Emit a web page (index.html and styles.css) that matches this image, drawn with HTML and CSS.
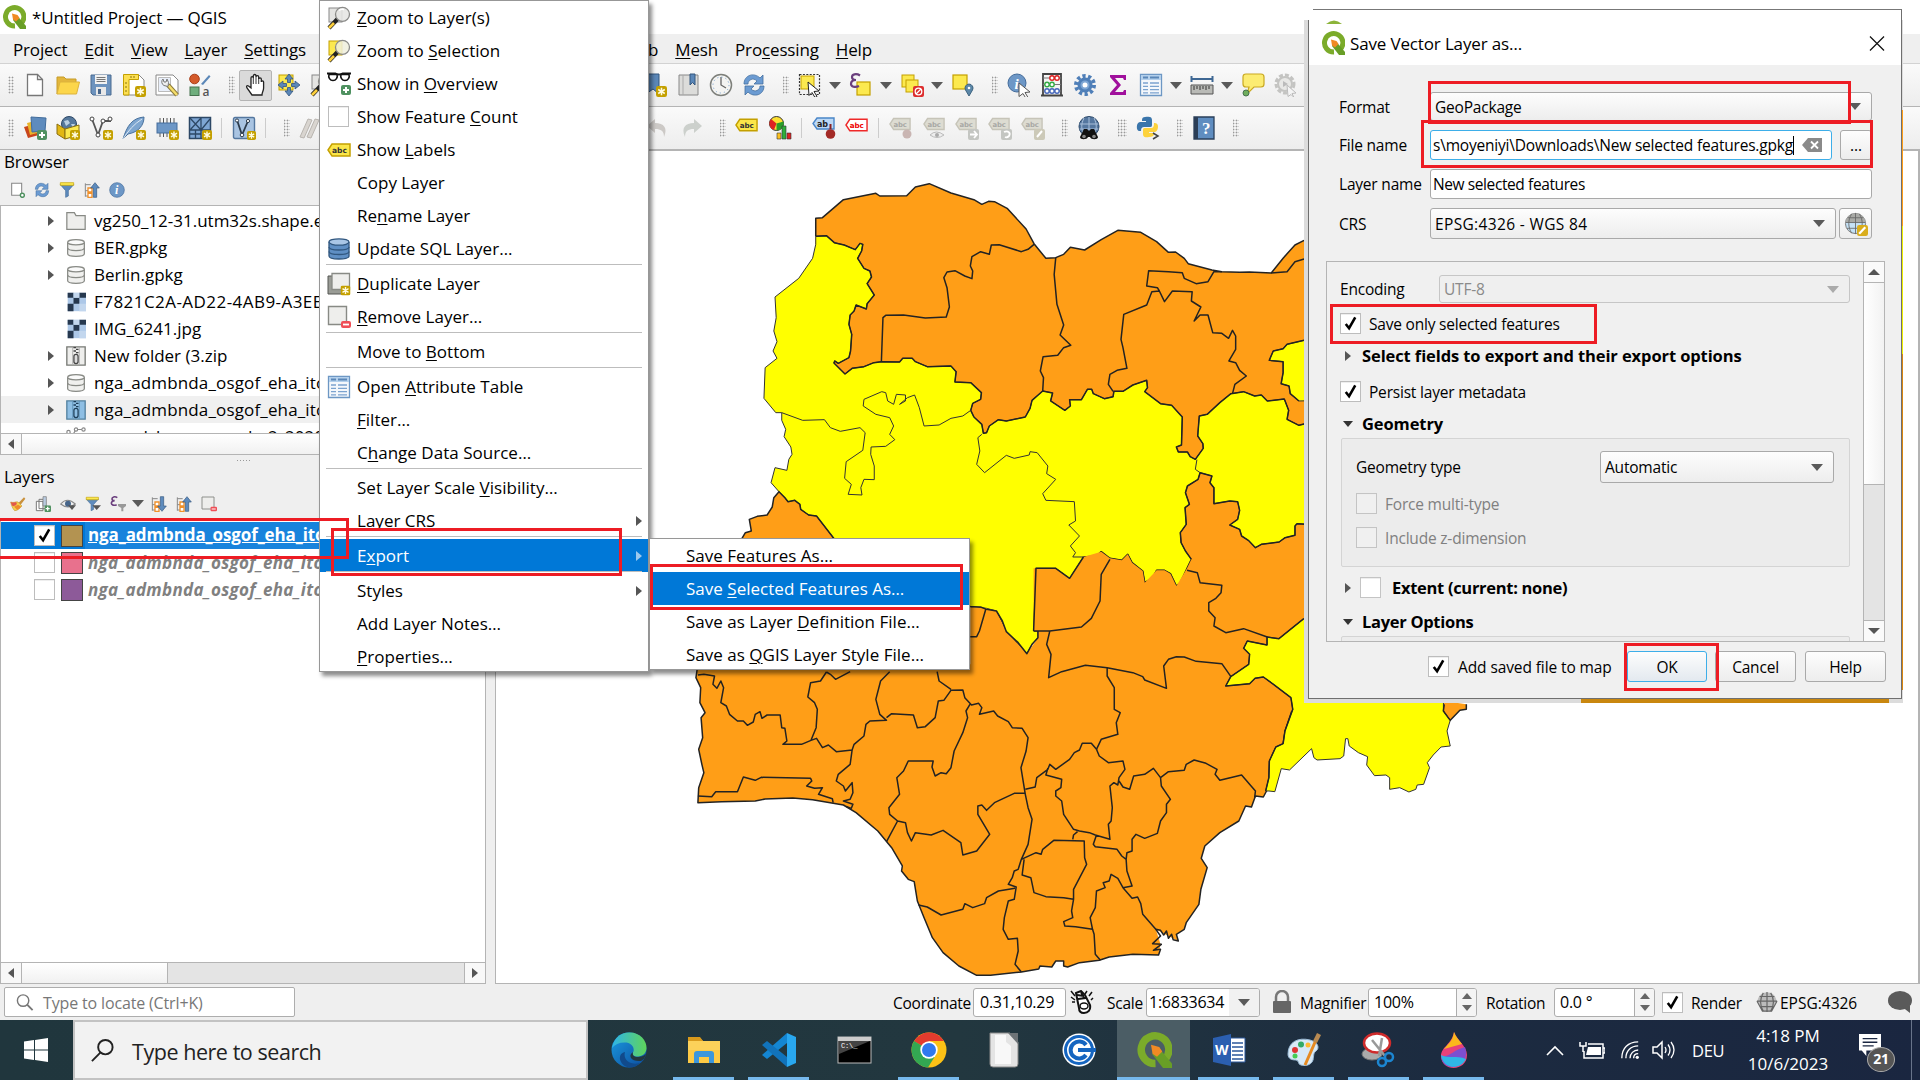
FILE: index.html
```html
<!DOCTYPE html>
<html lang="en">
<head>
<meta charset="utf-8">
<title>*Untitled Project — QGIS</title>
<link rel="stylesheet" href="styles.css">
</head>
<body>
<svg class="defs" width="0" height="0">
  <defs>
    <linearGradient id="gEdge" x1="0" y1="0" x2="1" y2="1"><stop offset="0" stop-color="#1b9de2"/><stop offset="1" stop-color="#0c4a9c"/></linearGradient>
    <linearGradient id="gEdge2" x1="0" y1="0" x2="1" y2="0"><stop offset="0" stop-color="#2fb4e8"/><stop offset="1" stop-color="#5fd45a"/></linearGradient>
  </defs>
  <symbol id="star" viewBox="0 0 10 10"><rect width="10" height="10" rx="2" fill="#c4a000"/><path d="M5 1.500v7M2 3.200l6 3.600M8 3.200L2 6.800" stroke="#fffbe0" stroke-width="1.400"/></symbol>
  <symbol id="plus" viewBox="0 0 10 10"><rect width="10" height="10" rx="2" fill="#4f9160"/><path d="M5 2v6M2 5h6" stroke="#fff" stroke-width="2"/></symbol>
  <symbol id="minus" viewBox="0 0 10 10"><rect y="2" width="10" height="7" rx="2" fill="#ef4e56"/><path d="M2 5.500h6" stroke="#fff" stroke-width="1.800"/></symbol>
  <symbol id="qgis" viewBox="0 0 24 24"><path d="M19 18.500A9.200 9.200 0 1 0 13 21" fill="none" stroke="#7bab2a" stroke-width="5"/><path d="M11.500 10.500l4.500 1 8 9.500v3h-6l-7-9z" fill="#689e26"/><path d="M10 8.500l5.500 1.500 2 3-3.500 3.500-3-2z" fill="#f08a24"/></symbol>
  <symbol id="new" viewBox="0 0 24 24"><path d="M4.500 1.500h10l5 5v16h-15z" fill="#fff" stroke="#777" stroke-width="1.300"/><path d="M14.500 1.500v5h5" fill="none" stroke="#777" stroke-width="1.300"/></symbol>
  <symbol id="open" viewBox="0 0 24 24"><path d="M1 21V4h7l2 2h10v4" fill="#e3b63c" stroke="#c79c28"/><path d="M1 21L4 9h19.500l-3 12z" fill="#fcd64b" stroke="#dcb33c"/></symbol>
  <symbol id="save" viewBox="0 0 24 24"><path d="M2 2h20v20H4l-2-2z" fill="#6d93be" stroke="#4b6b90"/><rect x="6" y="2" width="12" height="9" fill="#f1f1f1"/><path d="M7.500 4.500h9M7.500 6.500h9M7.500 8.500h9" stroke="#777"/><rect x="7" y="14" width="10" height="8" fill="#e8e8e8"/><rect x="9" y="16" width="3" height="5" fill="#48678c"/></symbol>
  <symbol id="layout" viewBox="0 0 24 24"><path d="M2 2h15l5 5v15H2z" fill="#fff" stroke="#888"/><path d="M1.500 1.500h15v5H7v15.500H1.500z" fill="#fcdf52" stroke="#c4a000"/><path d="M3 10h2M3 14h2M3 18h2M9 3v2M12 3v2" stroke="#8a7410"/><use href="#star" x="13" y="13" width="11" height="11"/></symbol>
  <symbol id="manager" viewBox="0 0 24 24"><path d="M1 2h17l5 5v15H1z" fill="#fff" stroke="#888"/><path d="M3.500 4.500h12v14h-12z" fill="#e9effa" stroke="#bbb"/><path d="M13 12l9 10" stroke="#8b7a3c" stroke-width="4.500"/><path d="M13.500 12.500l8.500 9.500" stroke="#f5dd6a" stroke-width="2.500"/><path d="M8 6a4 4 0 0 0 1 6.500l4 1 .5-4-1.500-3.500-1 3h-2z" fill="#eee" stroke="#777"/></symbol>
  <symbol id="style" viewBox="0 0 24 24"><circle cx="6.500" cy="6" r="4.800" fill="#d45a2a" stroke="#a8401a"/><path d="M13 11l8-9 1.500 1.500L15 12z" fill="#5b87b8"/><rect x="2" y="14" width="9" height="8.500" fill="#6fae7d" stroke="#46724f"/><text x="14.500" y="23" font-family="Open Sans" font-weight="600" font-size="12" fill="#555">a</text></symbol>
  <symbol id="hand" viewBox="0 0 24 24"><path d="M8 22l-5-7c-1-2 0-3 1.500-2L7 15V5c0-1.800 2.300-1.800 2.300 0V3c0-2 2.700-2 2.700 0v1c0-1.800 2.700-1.800 2.700 0v2c0-1.500 2.600-1.500 2.600 0v3c0-1.500 2.300-1.500 2.300 0v6c0 3-1.600 4-1.600 7z" fill="#fff" stroke="#222" stroke-width="1.300"/><path d="M9.300 5v6M12 4v7M14.700 5v6" stroke="#222" stroke-width=".9"/></symbol>
  <symbol id="pan" viewBox="0 0 24 24"><rect x="2" y="2" width="14" height="15" fill="#fce94f" stroke="#c4a000"/><path d="M12 1l4 5h-2.500v3.500h-3V6H8zM12 23l4-5h-2.500v-3.500h-3V18H8zM1 12l5-4v2.500h3.500v3H6V16zM23 12l-5-4v2.500h-3.500v3H18V16z" fill="#5b87b8" stroke="#33567f" stroke-width=".8"/></symbol>
  <symbol id="zoomL" viewBox="0 0 24 24"><rect x="2" y="2" width="13" height="14" fill="#e4e4e2" stroke="#888"/><path d="M10.500 13L2 22" stroke="#222" stroke-width="4.200"/><path d="M7 17l-5 5" stroke="#fccf3c" stroke-width="2.600"/><circle cx="15.500" cy="8.300" r="7" fill="#e6e6e4" fill-opacity=".88" stroke="#8b8b89" stroke-width="1.300"/><path d="M12 4.500c1-1 3-1.500 5-1" stroke="#fff" fill="none" stroke-width="1.500"/></symbol>
  <symbol id="zoomS" viewBox="0 0 24 24"><rect x="2" y="2" width="13" height="14" fill="#fce94f" stroke="#c4a000"/><path d="M10.500 13L2 22" stroke="#222" stroke-width="4.200"/><path d="M7 17l-5 5" stroke="#fccf3c" stroke-width="2.600"/><circle cx="15.500" cy="8.300" r="7" fill="#eeeedd" fill-opacity=".85" stroke="#8b8b89" stroke-width="1.300"/></symbol>
  <symbol id="glasses" viewBox="0 0 24 24"><path d="M0 1.500h8q4 2 8 0h8" fill="none" stroke="#111" stroke-width="2.200"/><path d="M2 2.500h8c1 3-1 6-4 6s-5-3-4-6zM14 2.500h8c1 3-1 6-4 6s-5-3-4-6z" fill="#fff" stroke="#111" stroke-width="1.600"/><use href="#plus" x="14" y="13" width="10" height="10"/></symbol>
  <symbol id="abc" viewBox="0 0 24 14"><path d="M5 1h18v12H5L1 7z" fill="#fbe649" stroke="#c4a000" stroke-width="1.500"/><text x="5" y="10.300" font-family="DejaVu Sans" font-weight="bold" font-size="7.500" fill="#333">abc</text></symbol>
  <symbol id="abcR" viewBox="0 0 24 14"><path d="M5 1h18v12H5L1 7z" fill="#fff" stroke="#ef2929" stroke-width="1.500"/><text x="5" y="10.300" font-family="DejaVu Sans" font-weight="bold" font-size="7.500" fill="#e00">abc</text></symbol>
  <symbol id="abcG" viewBox="0 0 24 14"><path d="M5 1h18v12H5L1 7z" fill="#dddcd2" stroke="#c6c4b8" stroke-width="1.500"/><text x="5" y="10.300" font-family="DejaVu Sans" font-weight="bold" font-size="7.500" fill="#a8a8a4">abc</text></symbol>
  <symbol id="db" viewBox="0 0 24 24"><path d="M2 5v14c0 4 20 4 20 0V5" fill="#5f8fc4" stroke="#31577f" stroke-width="1.300"/><ellipse cx="12" cy="5" rx="10" ry="3.200" fill="#a9c6e6" stroke="#31577f" stroke-width="1.300"/><path d="M2 10c0 4 20 4 20 0M2 14.500c0 4 20 4 20 0" fill="none" stroke="#31577f" stroke-width="1.300"/></symbol>
  <symbol id="dbG" viewBox="0 0 24 24"><path d="M2 5v14c0 4 20 4 20 0V5" fill="#f0f0ee" stroke="#888a85" stroke-width="1.500"/><ellipse cx="12" cy="5" rx="10" ry="3.200" fill="#fafafa" stroke="#888a85" stroke-width="1.500"/><path d="M2 12c0 4 20 4 20 0" fill="none" stroke="#888a85" stroke-width="1.500"/></symbol>
  <symbol id="dup" viewBox="0 0 24 24"><path d="M1 4h16v18H1z" fill="#9a9c96" stroke="#555753"/><path d="M5 1.500h17.500v16H5z" fill="#eeeeec" stroke="#888a85" stroke-width="1.300"/><use href="#star" x="13.500" y="13.500" width="10" height="10"/></symbol>
  <symbol id="rem" viewBox="0 0 24 24"><path d="M1.500 1.500h18v18h-18z" fill="#eeeeec" stroke="#888a85" stroke-width="1.400"/><use href="#minus" x="14" y="14" width="10" height="10"/></symbol>
  <symbol id="table" viewBox="0 0 24 24"><path d="M1.500 1.500h21v21h-21z" fill="#f4f7fb" stroke="#6d97c4" stroke-width="1.300"/><path d="M2 2h20v5H2z" fill="#b4d0ec"/><path d="M4 4.500h5M11 4.500h9" stroke="#5b87b8" stroke-width="1.800"/><path d="M4 10h5M11 10h9M4 13.300h5M11 13.300h9M4 16.600h5M11 16.600h9M4 19.900h5M11 19.900h9" stroke="#7ba3cf" stroke-width="1.300"/></symbol>
  <symbol id="folder" viewBox="0 0 24 24"><path d="M1 2h9l2 3.500h11V22H1z" fill="#eeeeec" stroke="#888a85" stroke-width="1.500"/></symbol>
  <symbol id="raster" viewBox="0 0 24 24"><path d="M2 1h22v22H2z" fill="#adc8e8"/><path d="M2 1h7v6H2zM16 1h8v6h-8zM9 7h7v7H9zM2 14h7v9H2z" fill="#26384f"/><path d="M9 1h7v6H9zM16 14h8v9h-8z" fill="#c3d7ee"/></symbol>
  <symbol id="zip" viewBox="0 0 24 24"><path d="M1 1h22v22H1z" fill="#eeeeec" stroke="#777974" stroke-width="1.600"/><path d="M8 1v21M16 1v21" stroke="#aaa"/><path d="M9 2h3M12 4h3M9 6h3M12 8h3" stroke="#444" stroke-width="1.600"/><rect x="9.500" y="10" width="5" height="11" rx="2.500" fill="#ddd" stroke="#444" stroke-width="1.500"/></symbol>
  <symbol id="zipB" viewBox="0 0 24 24"><path d="M1 1h22v22H1z" fill="#8fbfe4" stroke="#54819f" stroke-width="1.600"/><path d="M8 1v21M16 1v21" stroke="#5f93b8"/><path d="M9 2h3M12 4h3M9 6h3M12 8h3" stroke="#1c3d58" stroke-width="1.600"/><rect x="9.500" y="10" width="5" height="11" rx="2.500" fill="#8fbfe4" stroke="#1c3d58" stroke-width="1.500"/></symbol>
  <symbol id="pts" viewBox="0 0 24 24"><g fill="#fff" stroke="#888" stroke-width="1.400"><path d="M9 8l3-5h9"/><circle cx="3" cy="6" r="2"/><circle cx="12" cy="3" r="2"/><circle cx="21" cy="3" r="2"/></g></symbol>
  <symbol id="bookNew" viewBox="0 0 24 24"><path d="M3 1h13v20l-6-5-7 5z" fill="#5b87b8" stroke="#33567f"/><use href="#star" x="13" y="13" width="11" height="11"/></symbol>
  <symbol id="book" viewBox="0 0 24 24"><path d="M3 2h19v20H3z" fill="#dcdcda" stroke="#888"/><path d="M7 2v20" stroke="#aaa"/><path d="M14 1h5v11l-2.500-2.500L14 12z" fill="#5b87b8" stroke="#33567f"/></symbol>
  <symbol id="clock" viewBox="0 0 24 24"><circle cx="12" cy="12" r="10.500" fill="#f4f4f2" stroke="#7d7f7a" stroke-width="1.500"/><path d="M12 4v8l5 3" fill="none" stroke="#666" stroke-width="1.300"/><circle cx="12" cy="12" r="8" fill="none" stroke="#7fa5cf" stroke-dasharray="1.200 3"/></symbol>
  <symbol id="refresh" viewBox="0 0 24 24"><path d="M2 11c0-9 10-12 16-6l3-3v9h-9l3-3c-4-4-9-1-9 3zM22 13c0 9-10 12-16 6l-3 3v-9h9l-3 3c4 4 9 1 9-3z" fill="#6b9bd2" stroke="#44709f" stroke-width=".8"/></symbol>
  <symbol id="select" viewBox="0 0 24 24"><path d="M1.500 1.500h20v20h-20z" fill="none" stroke="#333" stroke-dasharray="2 1.400" stroke-width="1.200"/><rect x="3" y="3" width="13" height="13" fill="#fce94f" stroke="#c4a000"/><path d="M10 9l11 9-5 .5 3 5-2 1-3-5-3 3z" fill="#fff" stroke="#222"/></symbol>
  <symbol id="eps" viewBox="0 0 24 24"><rect x="8" y="9" width="13" height="13" fill="#fce94f" stroke="#c4a000" stroke-width="1.200"/><path d="M11 2.500C7 0 3 1.500 3 4s2 3 4 3c-3 0-5 1.500-5 4s4 4 8 2" fill="none" stroke="#6b3f7e" stroke-width="2.200"/></symbol>
  <symbol id="desel" viewBox="0 0 24 24"><rect x="2" y="2" width="12" height="12" fill="#fce94f" stroke="#c4a000"/><rect x="6" y="7" width="12" height="12" fill="#fce94f" stroke="#c4a000"/><rect x="13" y="13" width="11" height="11" rx="2" fill="#dd2e2e"/><circle cx="18.500" cy="18.500" r="3.300" fill="none" stroke="#fff" stroke-width="1.300"/><path d="M16 21l5-5" stroke="#fff" stroke-width="1.200"/></symbol>
  <symbol id="selloc" viewBox="0 0 24 24"><rect x="2" y="2" width="14" height="14" fill="#fce94f" stroke="#c4a000" stroke-width="1.200"/><path d="M18 23l-3.500-6a4 4 0 1 1 7 0z" fill="#5b87a8" stroke="#3f6480"/><circle cx="18" cy="15" r="1.300" fill="#fff"/></symbol>
  <symbol id="ident" viewBox="0 0 24 24"><circle cx="10" cy="10" r="9" fill="#6d97c6" stroke="#446c9b"/><text x="7.500" y="15.500" font-family="Liberation Serif" font-style="italic" font-weight="bold" font-size="15" fill="#fff">i</text><path d="M12 10l11 9-5 .5 3 5-2 1-3-5-4 3z" fill="#fff" stroke="#555"/></symbol>
  <symbol id="abacus" viewBox="0 0 24 24"><path d="M3 0v23M21 0v23M1 22.500h22M3 1h18" stroke="#444" stroke-width="1.800"/><path d="M3 5h18M3 11.500h18M3 18h18" stroke="#777"/><g fill="#fff" stroke-width="1.400"><g stroke="#d22"><circle cx="12" cy="5" r="2.200"/><circle cx="17" cy="5" r="2.200"/></g><g stroke="#3a4"><circle cx="7" cy="11.500" r="2.200"/><circle cx="12" cy="11.500" r="2.200"/></g><g stroke="#46b"><circle cx="7" cy="18" r="2.200"/><circle cx="12" cy="18" r="2.200"/><circle cx="17" cy="18" r="2.200"/></g></g></symbol>
  <symbol id="gear" viewBox="0 0 24 24"><circle cx="12" cy="12" r="9" fill="none" stroke="#4f7fb8" stroke-width="4" stroke-dasharray="3.200 2.450"/><circle cx="12" cy="12" r="6" fill="#7ea6d4" stroke="#4f7fb8" stroke-width="3"/><circle cx="12" cy="12" r="2.500" fill="#fff"/></symbol>
  <symbol id="gearG" viewBox="0 0 24 24"><circle cx="11" cy="11" r="9" fill="none" stroke="#c4c4c2" stroke-width="3" stroke-dasharray="4 2"/><circle cx="11" cy="11" r="7" fill="#e8e8e6" stroke="#c4c4c2" stroke-width="2"/><path d="M9 8l5 3-5 3z" fill="#bbb"/><path d="M13 12l9 8-4 .5 2 4-3-3-3 2z" fill="#f4f4f4" stroke="#bbb"/></symbol>
  <symbol id="sigma" viewBox="0 0 24 24"><path d="M4 2h16v5h-2l-1-2H9l6 7-6 7h8l1-2h2v5H4v-2l7-8-7-8z" fill="#a0109c"/></symbol>
  <symbol id="ruler" viewBox="0 0 24 24"><path d="M1 6h22M1.500 3v6M22.500 3v6" stroke="#3f6894" stroke-width="2"/><path d="M1 12h22v9H1z" fill="#b9bab6" stroke="#555"/><path d="M4 13v4M7 13v3M10 13v4M13 13v3M16 13v4M19 13v3" stroke="#333"/></symbol>
  <symbol id="tip" viewBox="0 0 24 24"><path d="M5 1h15q3 0 3 3v7q0 3-3 3h-7l-7 7 2-7H5q-3 0-3-3V4q0-3 3-3z" fill="#fcec72" stroke="#c9a820" stroke-width="1.200"/><circle cx="5" cy="20" r="3" fill="#6fae5d" stroke="#46724f"/></symbol>
  <symbol id="layers" viewBox="0 0 24 24"><path d="M1 11l11-3 4 11-11 3z" fill="#c8461c"/><path d="M4 7l12-3 2 12-11 3z" fill="#e9b52a"/><path d="M8 1l15 1-1 13-13 1z" fill="#5e8bbd" stroke="#416c9b"/><use href="#plus" x="14" y="14" width="10" height="10"/></symbol>
  <symbol id="box" viewBox="0 0 24 24"><circle cx="13" cy="8" r="7.500" fill="#56789c" stroke="#2d4866"/><path d="M8 5l4-1 2 3-4 3zM15 8l4 0-2 4z" fill="#b9cfe2"/><path d="M1 8l8 5v10l-8-5z" fill="#e2b714" stroke="#8a6f10"/><path d="M9 13l14-4v10l-14 4z" fill="#fce94f" stroke="#8a6f10"/><use href="#star" x="14" y="14" width="10" height="10"/></symbol>
  <symbol id="vec" viewBox="0 0 24 24"><path d="M3 3l6 16 5-14h8" fill="none" stroke="#555" stroke-width="1.800"/><g fill="#fff" stroke="#444"><circle cx="3" cy="3" r="2"/><circle cx="9" cy="19" r="2"/><circle cx="14" cy="5" r="2"/><circle cx="21" cy="3" r="2"/></g><use href="#star" x="14" y="14" width="10" height="10"/></symbol>
  <symbol id="feather" viewBox="0 0 24 24"><path d="M1 23C5 10 10 2 22 1c0 8-5 15-16 17z" fill="#7ea6d0" stroke="#47709c"/><path d="M1 23C6 15 12 8 20 3" fill="none" stroke="#dce8f4"/><use href="#star" x="14" y="14" width="10" height="10"/></symbol>
  <symbol id="chip" viewBox="0 0 24 24"><path d="M5 2v19M8.500 2v19M12 2v19M15.500 2v19M19 2v19" stroke="#555"/><rect x="2" y="7" width="20" height="10" fill="#6d97c6" stroke="#446c9b"/><use href="#star" x="14" y="14" width="10" height="10"/></symbol>
  <symbol id="mesh" viewBox="0 0 24 24"><path d="M1.500 1.500h21v21h-21z" fill="#7ea6d4" stroke="#2d4866" stroke-width="1.500"/><path d="M13 2v20M2 14h20M2 2l11 12M13 2L2 14M13 14L22 3M7.500 14v8M2 18h11" stroke="#2d4866" stroke-width="1.300"/><use href="#star" x="14" y="14" width="10" height="10"/></symbol>
  <symbol id="vbox" viewBox="0 0 24 24"><rect x="1.500" y="1.500" width="21" height="21" rx="1.500" fill="#a9c4e2" stroke="#54779f" stroke-width="1.400"/><path d="M5 4l5 15 6-14" fill="none" stroke="#2e3d4d" stroke-width="1.800"/><circle cx="10" cy="19" r="1.800" fill="#fff" stroke="#2e3d4d"/><circle cx="5" cy="4.500" r="1.600" fill="#fff" stroke="#2e3d4d"/><circle cx="16" cy="5" r="1.600" fill="#fff" stroke="#2e3d4d"/><use href="#star" x="15" y="15" width="9" height="9"/></symbol>
  <symbol id="pencilG" viewBox="0 0 24 24"><path d="M1 21L9 3l4 1-8 18zM8 21l8-18 4 1-8 18z" fill="#d9d5d0" stroke="#b9b5b0"/></symbol>
  <symbol id="undo" viewBox="0 0 24 24"><path d="M1 10l8-7v4c9 0 13 5 9 14 0-6-3-8-9-8v4z" fill="#ccc9c6"/></symbol>
  <symbol id="redo" viewBox="0 0 24 24"><path d="M23 10l-8-7v4C6 7 2 12 6 21c0-6 3-8 9-8v4z" fill="#ccd0cc"/></symbol>
  <symbol id="chart" viewBox="0 0 24 24"><circle cx="8.500" cy="7.500" r="7" fill="#fcdf30" stroke="#333"/><path d="M8.500 7.500L3 3A7 7 0 0 0 6 14z" fill="#d22"/><path d="M8.500 7.500l7-2a7 7 0 0 1-7 9z" fill="#2a9d2a"/><path d="M9 17h4v6H9z" fill="#fcc020" stroke="#333" stroke-width=".6"/><path d="M14 10h4v13h-4z" fill="#2eaf3a" stroke="#333" stroke-width=".6"/><path d="M19 17h4v6h-4z" fill="#d22" stroke="#333" stroke-width=".6"/></symbol>
  <symbol id="pin" viewBox="0 0 24 24"><path d="M5 2h17v11H5L1 7.500z" fill="#bcd8f5" stroke="#4a86c8" stroke-width="1.400"/><text x="5" y="10.500" font-family="DejaVu Sans" font-weight="bold" font-size="8" fill="#222">ab</text><circle cx="18.500" cy="18" r="4.800" fill="#a32a26"/><path d="M18.500 13V8" stroke="#822" stroke-width="2"/></symbol>
  <symbol id="pinG" viewBox="0 0 24 24"><use href="#abcG" y="1" width="22" height="14"/><circle cx="18" cy="18" r="4.500" fill="#c9b5b2"/></symbol>
  <symbol id="eyeG" viewBox="0 0 24 24"><use href="#abcG" x="1" y="1" width="22" height="14"/><path d="M8 19q6-6 14 0-7 5-14 0z" fill="#eee" stroke="#bbb"/><circle cx="15" cy="19" r="2" fill="#aaa"/></symbol>
  <symbol id="movG" viewBox="0 0 24 24"><use href="#abcG" x="0" y="1" width="22" height="14"/><rect x="13" y="13" width="11" height="11" rx="2" fill="#c4c6c2"/><path d="M15 18.500h7M19 15l3 3.500-3 3.500" fill="none" stroke="#fff" stroke-width="1.800"/></symbol>
  <symbol id="rotG" viewBox="0 0 24 24"><use href="#abcG" x="0" y="1" width="22" height="14"/><rect x="13" y="13" width="11" height="11" rx="2" fill="#c4c6c2"/><path d="M16 16c4-2 7 1 5 4-1 1-2 2-4 1" fill="none" stroke="#fff" stroke-width="1.800"/></symbol>
  <symbol id="edG" viewBox="0 0 24 24"><use href="#abcG" x="0" y="1" width="22" height="14"/><rect x="13" y="13" width="11" height="11" rx="2" fill="#ccc9b8"/><path d="M16 21l5-6" stroke="#fff" stroke-width="2"/></symbol>
  <symbol id="globe" viewBox="0 0 24 24"><circle cx="12" cy="10.500" r="10" fill="#55779f" stroke="#2a4769"/><path d="M2.500 8h19M2.500 13h19M12 1v19M7 2c-3 6-3 11 0 17M17 2c3 6 3 11 0 17" stroke="#a9c0da" fill="none"/><path d="M7 13h3l2 2 2-2h3l4 8c0 3-7 3-8 0h-2c-1 3-8 3-8 0z" fill="#111"/><circle cx="7" cy="20.500" r="1.800" fill="#888"/><circle cx="17" cy="20.500" r="1.800" fill="#888"/></symbol>
  <symbol id="python" viewBox="0 0 24 24"><path d="M9 1c5-1 7 0 7 3v5c0 2-1 2-3 2H8c-2 0-3 1-3 4H3c-3 0-3-9 1-9h6V5H6V4c0-2 1-3 3-3z" fill="#3a75ab"/><path d="M13 21c-5 1-6-1-6-3v-4c0-2 1-2 3-2h5c2 0 3-1 3-5h1c5 0 3 9 0 9h-6v1h5v1c0 2-2 3-5 3z" fill="#fdd23c"/><path d="M17 17l5 3-5 3" fill="none" stroke="#444" stroke-width="1.500"/></symbol>
  <symbol id="help" viewBox="0 0 24 24"><path d="M2 1h20v22H2z" fill="#5f8dc0" stroke="#2a3f5a" stroke-width="1.300"/><path d="M2 1h4v22H2z" fill="#2b3e57"/><text x="10" y="18" font-family="Liberation Serif" font-size="17" fill="#fff">?</text></symbol>
  <symbol id="addL" viewBox="0 0 24 24"><path d="M4 2h15v18H4z" fill="#fff" stroke="#888" stroke-width="1.600"/><circle cx="20" cy="20" r="3" fill="#fff" stroke="#4f9160" stroke-width="2.200"/></symbol>
  <symbol id="filter" viewBox="0 0 24 24"><path d="M2 4h20l-8 9v8l-4 2V13z" fill="#5e8bbd" stroke="#416c9b"/><path d="M2 1h20v4H2z" fill="#fce94f" stroke="#c4a000"/></symbol>
  <symbol id="colU" viewBox="0 0 24 24"><path d="M2 2v20M2 4h8M2 13h6M2 21h6" stroke="#888" stroke-width="1.500"/><path d="M6 9h6v6H6zM6 17h6v6H6z" fill="#fff" stroke="#f0902a" stroke-width="2"/><path d="M16.500 1l6.500 8h-4v14h-5V9h-4z" fill="#5e8bbd" stroke="#33567f"/></symbol>
  <symbol id="colD" viewBox="0 0 24 24"><path d="M2 2v20M2 4h8M2 13h6M2 21h6" stroke="#888" stroke-width="1.500"/><path d="M6 9h6v6H6zM6 17h6v6H6z" fill="#fff" stroke="#f0902a" stroke-width="2"/><path d="M16.500 23l6.500-8h-4V1h-5v14h-4z" fill="#5e8bbd" stroke="#33567f"/></symbol>
  <symbol id="info" viewBox="0 0 24 24"><circle cx="12" cy="12" r="11" fill="#6d97c6" stroke="#446c9b"/><text x="9" y="18.500" font-family="Liberation Serif" font-style="italic" font-weight="bold" font-size="18" fill="#fff">i</text></symbol>
  <symbol id="brush" viewBox="0 0 24 24"><path d="M13 10l8-8 2 2-7 9z" fill="#c9913c"/><path d="M1 9c5 2 7-1 11 0l6 6c-3 3-6 7-11 7C4 19 2 14 1 9z" fill="#f4d34a" stroke="#b98a2a" stroke-width=".8"/><path d="M1 9c5 2 6-1 9 1 1 4-3 4-4 5s-3 1-5-6z" fill="#e2574c"/><path d="M6 16l6-3 5 3-6 5z" fill="#ee8a2c"/></symbol>
  <symbol id="addG" viewBox="0 0 24 24"><path d="M2 8h10v14H2zM6 5h10v14H6z" fill="#fff" stroke="#777" stroke-width="1.500"/><path d="M12 1h5v14h-5z" fill="#b9cbe0" stroke="#777"/><use href="#plus" x="14" y="14" width="10" height="10"/></symbol>
  <symbol id="eye" viewBox="0 0 24 24"><path d="M1 12q10-11 22 0-11 9-22 0z" fill="#eee" stroke="#888" stroke-width="1.600"/><circle cx="12" cy="11.500" r="4.500" fill="#46658a"/><path d="M12 14h12l-6 7z" fill="#555"/></symbol>
  <symbol id="filtD" viewBox="0 0 24 24"><use href="#filter" width="22" height="24"/><path d="M11 14h13l-6.500 7z" fill="#555"/></symbol>
  <symbol id="epsD" viewBox="0 0 24 24"><path d="M11 2.500C7 0 3 1.500 3 4s2 3 4 3c-3 0-5 1.500-5 4s4 4 8 2" fill="none" stroke="#6b3f7e" stroke-width="2.400"/><path d="M12 12h12v3l-4 3v5h-3v-5l-5-3z" fill="#999"/></symbol>
  <symbol id="crs" viewBox="0 0 24 24"><circle cx="12" cy="12" r="10.500" fill="#c5e2f6" stroke="#777"/><path d="M1.500 11C3 3 8 1.500 12 1.500S21 3 22.500 11z" fill="#a9aaa6"/><path d="M2 11h20M4 6h16M3 17h18M12 1v22M8 2c-4 6-4 14 0 20M16 2c4 6 4 14 0 20" fill="none" stroke="#666" stroke-width=".9"/></symbol>
  <symbol id="pen" viewBox="0 0 10 10"><rect width="10" height="10" rx="2" fill="#d9ad1c"/><path d="M2 8l5.500-6" stroke="#fff" stroke-width="2"/></symbol>
  <symbol id="check" viewBox="0 0 20 20"><path d="M5 10.500l3.500 4.500L15 3.500" fill="none" stroke="#000" stroke-width="2.700"/></symbol>
</svg>

<div class="screen">
  <header class="titlebar"><svg class="i24"><use href="#qgis"/></svg><span>*Untitled Project — QGIS</span></header>
  <nav class="menubar">
    <div class="left"><span>Pro<u>j</u>ect</span><span><u>E</u>dit</span><span><u>V</u>iew</span><span><u>L</u>ayer</span><span><u>S</u>ettings</span></div>
    <span>b</span><span><u>M</u>esh</span><span>Pro<u>c</u>essing</span><span><u>H</u>elp</span>
  </nav>
  <div class="toolbar one">
    <div class="left"><i class="grip first"></i><b><svg><use href="#new"/></svg></b><b><svg><use href="#open"/></svg></b><b><svg><use href="#save"/></svg></b><b><svg><use href="#layout"/></svg></b><b><svg><use href="#manager"/></svg></b><b><svg><use href="#style"/></svg></b><i class="grip"></i><b class="on"><svg><use href="#hand"/></svg></b><b><svg><use href="#pan"/></svg></b><b><svg><use href="#zoomL"/></svg></b></div>
    <b><svg><use href="#bookNew"/></svg></b><b><svg><use href="#book"/></svg></b><b><svg><use href="#clock"/></svg></b><b><svg><use href="#refresh"/></svg></b><i class="grip"></i>
    <b><svg><use href="#select"/></svg></b><i class="drop"></i><b><svg><use href="#eps"/></svg></b><i class="drop"></i><b><svg><use href="#desel"/></svg></b><i class="drop"></i><b><svg><use href="#selloc"/></svg></b><i class="grip"></i>
    <b><svg><use href="#ident"/></svg></b><b><svg><use href="#abacus"/></svg></b><b><svg><use href="#gear"/></svg></b><b><svg><use href="#sigma"/></svg></b><b><svg><use href="#table"/></svg></b><i class="drop"></i><b><svg><use href="#ruler"/></svg></b><i class="drop"></i><b><svg><use href="#tip"/></svg></b><b><svg><use href="#gearG"/></svg></b>
  </div>
  <div class="toolbar two">
    <div class="left"><i class="grip first"></i><b><svg><use href="#layers"/></svg></b><b><svg><use href="#box"/></svg></b><b><svg><use href="#vec"/></svg></b><b><svg><use href="#feather"/></svg></b><b><svg><use href="#chip"/></svg></b><b><svg><use href="#mesh"/></svg></b><i class="sep"></i><b><svg><use href="#vbox"/></svg></b><i class="sep"></i><i class="grip"></i><b><svg><use href="#pencilG"/></svg></b></div>
    <b><svg><use href="#undo"/></svg></b><b><svg><use href="#redo"/></svg></b><i class="grip"></i>
    <b><svg class="tag"><use href="#abc"/></svg></b><b><svg><use href="#chart"/></svg></b><i class="sep"></i><b><svg><use href="#pin"/></svg></b><b><svg class="tag"><use href="#abcR"/></svg></b><i class="sep"></i><b><svg><use href="#pinG"/></svg></b><b><svg><use href="#eyeG"/></svg></b><b><svg><use href="#movG"/></svg></b><b><svg><use href="#rotG"/></svg></b><b><svg><use href="#edG"/></svg></b><i class="grip"></i><b><svg><use href="#globe"/></svg></b><i class="grip wide"></i><b><svg><use href="#python"/></svg></b><i class="grip"></i><b><svg><use href="#help"/></svg></b><i class="grip"></i>
  </div>

  <main class="work">
    <aside class="docks">
      <h2 class="dock-title">Browser</h2>
      <div class="dock-tools browser-tools"><svg><use href="#addL"/></svg><svg><use href="#refresh"/></svg><svg><use href="#filter"/></svg><svg><use href="#colU"/></svg><svg><use href="#info"/></svg></div>
      <ul class="tree">
        <li><i class="tri"></i><svg><use href="#folder"/></svg>vg250_12-31.utm32s.shape.ebenen</li>
        <li><i class="tri"></i><svg><use href="#dbG"/></svg>BER.gpkg</li>
        <li><i class="tri"></i><svg><use href="#dbG"/></svg>Berlin.gpkg</li>
        <li class="spaced"><i class="tri none"></i><svg><use href="#raster"/></svg>F7821C2A-AD22-4AB9-A3EE</li>
        <li><i class="tri none"></i><svg><use href="#raster"/></svg>IMG_6241.jpg</li>
        <li><i class="tri"></i><svg><use href="#zip"/></svg>New folder (3.zip</li>
        <li class="name"><i class="tri"></i><svg><use href="#dbG"/></svg>nga_admbnda_osgof_eha_itos</li>
        <li class="alt name"><i class="tri"></i><svg><use href="#zipB"/></svg>nga_admbnda_osgof_eha_itos</li>
        <li><i class="tri none"></i><svg><use href="#pts"/></svg>nga_rdsless_oms_rds_2_2020</li>
      </ul>
      <div class="hscroll"><i class="ar l"></i><i class="thumb full"></i></div>
      <div class="split"></div>
      <h2 class="dock-title layers-title">Layers</h2>
      <div class="dock-tools layer-tools"><svg><use href="#brush"/></svg><svg><use href="#addG"/></svg><svg><use href="#eye"/></svg><svg><use href="#filtD"/></svg><svg><use href="#epsD"/></svg><i class="drop"></i><svg><use href="#colD"/></svg><svg><use href="#colU"/></svg><svg><use href="#rem"/></svg></div>
      <ul class="layers">
        <li class="sel"><span class="cb"><svg><use href="#check"/></svg></span><i class="sw tan"></i><span class="nm">nga_admbnda_osgof_eha_itos</span></li>
        <li><span class="cb"></span><i class="sw pink"></i><span class="nm">nga_admbnda_osgof_eha_itos</span></li>
        <li><span class="cb"></span><i class="sw violet"></i><span class="nm">nga_admbnda_osgof_eha_itos</span></li>
      </ul>
      <div class="hscroll bottom"><i class="ar l"></i><i class="thumb"></i><i class="ar r"></i></div>
    </aside>
    <section class="canvas">
      <svg class="map" viewBox="496 150 1422 833" width="1422" height="833">
        <!-- northern states -->
        <g transform="translate(690 170) scale(.39541 .33333)">
          <path class="o" d="M318 142L335 140 388 86 470 67 480 75 548 74 570 48 605 38 660 66 718 86 738 100 755 91 770 92 802 112 850 174 870 218 900 262 925 260 945 250 962 229 998 237 1040 206 1082 178 1140 184 1180 212 1210 244 1228 243 1250 262 1260 278 1320 297 1345 302 1390 304 1415 303 1470 306 1500 262 1510 248 1530 222 1553 208 1600 190V1270H130L132 1100 140 1085 155 1080 150 1045 170 1036 195 1032 208 1008 212 980 225 962 240 968 300 700 318 196z"/>
          <path class="y" d="M318 196L345 194 365 215 390 222 418 236 430 217 437 220 434 240 424 262 440 292 455 300 459 318 448 338 466 372 448 398 446 414 420 402 415 420 405 432 402 460 409 490 406 540 402 560 375 577 366 570 364 576 392 609 410 592 440 587 465 575 484 572 530 573 538 562 562 562 570 572 600 587 660 585 673 602 670 633 710 635 737 665 735 685 715 697 710 718 718 738 738 760 742 787 750 785 757 765 780 746 800 750 848 738 860 712 865 688 892 660 917 666 912 690 948 718 962 705 960 686 990 686 1005 655 1016 655 1020 668 1048 683 1070 677 1072 661 1095 661 1120 642 1155 628 1157 650 1150 662 1190 698 1218 703 1245 738 1243 822 1230 828 1235 843 1258 843 1265 857 1278 865 1298 832 1297 818 1284 795 1288 735 1308 730 1340 695 1368 668 1400 662 1428 675 1445 672 1460 690 1503 684 1514 718 1510 745 1540 763 1560 757 1600 757V1060L1560 1060 1535 1058 1530 1065 1530 1093 1505 1100 1490 1113 1445 1120 1430 1130 1412 1108 1395 1095 1390 1075 1365 1062 1385 1045 1390 1018 1385 992 1365 990 1325 998 1325 950 1315 935 1320 915 1290 905 1285 925 1258 945 1253 965 1263 1000 1252 1010 1255 1060 1240 1085 1242 1115 1253 1140 1268 1165 1257 1192 1240 1235 1230 1245 1215 1208 1200 1198 1180 1198 1170 1220 1150 1235 1145 1200 1118 1175 1107 1150 1092 1168 1062 1162 1040 1142 1028 1155 995 1158 960 1222 925 1192 875 1192 869 1380 880 1382 880 1400 865 1420 852 1448 800 1382 775 1320 750 1312 708 1306 365 1104 320 1035 300 1032 280 1015 278 1000 265 988 248 992 240 980 225 962 205 935 215 890 245 898 250 865 258 850 255 828 238 797 242 775 232 748 232 725 217 725 187 682 190 590 220 562 210 540 220 512 212 480 218 440 215 378 275 322 310 262 318 220z"/>
          <path class="y" d="M1600 500L1553 508 1510 520 1500 533 1475 540 1465 568 1500 572 1500 605 1495 638 1515 645 1518 668 1540 690 1600 688z"/>
          <path class="k" d="M318 196V142L335 140 388 86 470 67 480 75 548 74 570 48 605 38 660 66 718 86 738 100 755 91 770 92 802 112 850 174 870 218 900 262 925 260 945 250 962 229 998 237 1040 206 1082 178 1140 184 1180 212 1210 244 1228 243 1250 262 1260 278 1320 297 1345 302 1390 304 1415 303 1470 306 1500 262 1510 248 1530 222 1553 208M130 1105L140 1085 155 1080 150 1045 170 1036 195 1032 208 1008 212 980 225 962 240 980 248 992 265 988 278 1000 280 1015 300 1032 320 1035 365 1104"/>
          <!-- borders between selected and unselected states -->
          <path class="k" d="M318 196L345 194 365 215 390 222 418 236 430 217 437 220 434 240 424 262 440 292 455 300 459 318 448 338 466 372 448 398 446 414 420 402 415 420 405 432 402 460 409 490 406 540 402 560 375 577 366 570 364 576 392 609 410 592 440 587 465 575 484 572 530 573 538 562 562 562 570 572 600 587 660 585 673 602 670 633 710 635 737 665 735 685 715 697 710 718 718 738 738 760 742 787 750 785 757 765 780 746 800 750 848 738 860 712 865 688 892 660 917 666 912 690 948 718 962 705 960 686 990 686 1005 655 1016 655 1020 668 1048 683 1070 677 1072 661 1095 661 1120 642 1155 628 1157 650 1150 662 1190 698 1218 703 1245 738 1243 822 1230 828 1235 843 1258 843 1265 857 1278 865 1298 832 1297 818 1284 795 1288 735 1308 730 1340 695 1368 668 1400 662 1428 675 1445 672 1460 690 1503 684 1514 718 1510 745 1540 763 1560 757M1560 1060L1535 1058 1530 1065 1530 1093 1505 1100 1490 1113 1445 1120 1430 1130 1412 1108 1395 1095 1390 1075 1365 1062 1385 1045 1390 1018 1385 992 1365 990 1325 998 1325 950 1315 935 1320 915 1290 905 1285 925 1258 945 1253 965 1263 1000 1252 1010 1255 1060 1240 1085 1242 1115 1253 1140 1268 1165 1257 1192 1240 1235 1230 1245 1215 1208 1200 1198 1180 1198 1170 1220 1150 1235 1145 1200 1118 1175 1107 1150 1092 1168 1062 1162 1040 1142 1028 1155 995 1158M1553 508L1510 520 1500 533 1475 540 1465 568 1500 572 1500 605 1495 638 1515 645 1518 668 1540 690"/>
          <path class="k" d="M484 572L488 440 495 433 540 432 595 441 648 438 656 408 650 350 642 320 650 303 670 299 695 315 713 323 715 300 709 285 713 257 735 242 757 250 762 222 782 221 838 242 855 235 870 220M925 260L921 310 928 400 945 462 936 492 963 523 945 530 930 553 893 557 886 600 894 620 892 660M1070 661L1058 640 1062 610 1080 598 1105 592 1095 530 1090 505 1097 430 1155 402 1168 362 1187 360 1182 350 1155 345 1160 299 1210 302 1245 305 1250 322 1280 338 1310 332 1325 302 1345 302M1187 360L1200 392 1220 360 1270 362 1268 390 1292 408 1275 450 1290 432 1310 432 1322 485 1345 487 1362 502 1372 478 1380 495 1380 535 1363 570 1380 575 1390 598 1407 615 1378 640 1372 668M1470 306L1510 302 1530 272 1553 264"/>
          <path class="t" d="M232 725L285 748 340 746 355 770 380 781 430 770 443 785 437 838 395 872 391 922 408 940 400 970 435 972 432 950 440 925 466 926 466 885 457 850 458 828 495 826 518 806 505 790 515 765 505 740 470 730 438 705 440 685 485 662 495 665 500 690 515 700 522 670 545 672 545 690 530 700 550 680 568 672 580 710 592 765 630 762 660 742 690 735 710 718M738 790L728 800 733 840 725 880 745 905 800 853 820 862 858 852 860 842 878 845 905 885 902 908 925 925 892 968 900 988 972 992 975 1050 958 1062 985 1095 962 1125 975 1145 968 1158 995 1158M1282 866L1278 895 1290 905"/>
        </g>
        <!-- southern states -->
        <g transform="translate(690 530) scale(.39541 .33333)">
          <path class="o" d="M709 227L748 232 775 240 800 302 852 368 880 320 880 302 869 300V112H925L960 142 995 78 1040 62 1062 82 1092 88 1107 70 1118 95 1145 120 1150 155 1180 118 1200 118 1215 128 1230 165 1257 112 1268 85H1600L1522 540 1505 600 1500 640 1482 650 1466 690 1465 740 1458 780 1450 798 1430 795 1420 828 1405 825 1388 870 1340 905 1302 945 1293 982 1308 1010 1292 1075 1287 1120 1255 1175 1250 1195 1230 1210 1235 1230 1210 1215 1178 1195 1190 1240 1185 1272 1120 1270 1060 1278 1035 1288 985 1295 955 1308 945 1305 945 1290 925 1290 915 1308 885 1305 882 1314 838 1323 760 1333 725 1333 680 1305 640 1265 613 1220 592 1160 575 1110 567 1052 552 1045 535 1020 537 1005 510 950 475 900 420 845 388 822 310 806 260 801 190 804 165 810 80 812 20 815 22 770 35 725 30 700 22 655 32 620 28 560 38 545 25 515 27 470 15 440 20 400H709z"/>
          <path class="k" d="M1522 540L1505 600 1500 640 1482 650 1466 690 1465 740 1458 780 1450 798 1430 795 1420 828 1405 825 1388 870 1340 905 1302 945 1293 982 1308 1010 1292 1075 1287 1120 1255 1175 1250 1195 1230 1210 1235 1230 1222 1226 1218 1210 1210 1222 1205 1200 1198 1212 1190 1198 1178 1195 1190 1215 1170 1238 1192 1240 1172 1258 1190 1255 1185 1272 1120 1270 1060 1278 1035 1288 985 1295 955 1308 945 1305 945 1290 925 1290 915 1308 885 1305 882 1314 838 1323 760 1333 725 1333 680 1305 640 1265 613 1220 592 1160 575 1110 567 1052 552 1045 535 1020 537 1005 510 950 475 900 420 845 388 822 310 806 260 801 190 804 165 810 80 812 20 815 22 770 35 725 30 700 22 655 32 620 28 560 38 545 25 515 27 470 15 440 20 400"/>
          <path class="k" d="M709 227L735 228 750 235 775 240 790 270 800 302 830 335 852 368 865 340 880 320 880 302M995 78L960 142 925 112H875L869 300M709 317H725L732 300 748 235M1062 85L1040 130 1037 210 1015 262 990 288 910 300 869 300M910 300L902 340 913 370 907 440 940 422 1000 403 1055 410 1120 425 1145 437 1150 447 1205 472 1198 405 1210 385 1230 377 1250 378 1280 391 1345 398 1368 437M1257 118L1283 125 1290 155 1345 163 1343 185 1330 202 1312 215 1312 240 1328 260 1325 285 1355 305 1400 293 1460 318M1055 410L1055 435 1073 470 1073 535 1088 545 1078 575 1082 610 1040 625 1028 655"/>
          <path class="k" d="M20 432L35 430 62 435 58 460 68 472 78 450 85 470 78 515 92 525 100 550 120 570 135 570 145 583 160 573 165 550 177 542 182 562 195 552 228 552 232 590 240 592 245 630 235 640 282 640 306 628 320 622 335 650 350 642 370 662 410 657 415 640 440 615 445 580 455 570 497 568 480 550 470 505 482 450 505 422M345 423L330 450 305 455 298 498 315 515 322 535 319 590 306 628M345 423L355 430 368 445 405 422M497 560L510 548 565 552 575 590 595 587 620 560 628 510 642 508 660 478 690 477 695 500 712 522 730 517 738 530 732 550 768 540 778 555 805 572 815 590 840 592 855 620 850 660 837 710 848 790 855 830 865 865 855 940 838 985 830 1015 820 1020 815 1040 805 1060 825 1068 820 1105 805 1110 795 1160 792 1195 805 1225 828 1222 830 1260 822 1300 838 1323M625 422L630 450 660 475M708 520L698 540 702 560 690 605 668 660 660 710 648 728 635 725 620 735 612 708 615 690 552 690 540 720 523 740 530 790 503 830 505 850 525 870 545 875 550 905 560 930 570 905 610 912 640 898 685 935 690 972 725 960 758 910 728 850 728 825 738 822 750 838 770 815 820 787 848 787M410 657L405 700 375 730 370 750 388 765 393 780 410 755 412 785 405 805 388 810 412 820 408 832 395 826M20 795L55 797 65 782 120 782 135 738 165 748 180 739 305 742 308 750 295 765 315 772 335 770 325 790 360 803 362 815M497 932L525 870M578 1122L600 1128 635 1152 690 1135 695 1118 715 1130 745 1118 750 1100 780 1080 822 1072"/>
          <path class="k" d="M848 775L873 768 877 740 905 715 910 700 925 715 960 685 972 665 985 657 992 637 1015 637 1028 655 1035 675 1058 695 1095 690 1100 715 1085 740 1082 762 1072 755 1062 765 1068 830 1065 870 1058 880 1062 925 1025 912 1010 905 985 900 970 895 945 850 940 810 925 795 925 780 938 770 940 745 900 732 905 712M1085 750L1095 768 1112 775 1122 735 1150 730 1172 712 1190 740 1192 765 1215 805 1205 820 1205 845 1190 870 1182 907 1150 922 1128 910 1118 925 1118 960 1105 965 1103 985 1092 975 1080 955 1025 947 1020 940 1028 912M1190 740L1210 722 1250 718 1255 700 1275 687 1305 697 1333 715 1328 730 1340 748 1395 732 1430 780 1428 800M838 985L875 965 888 970 892 955 920 928 997 930 998 980 1003 1000 970 1075 970 1105 945 1100 900 1097 870 1085 862 1040 840 1032 845 985M980 902L970 912 968 925M970 1105L965 1140 968 1160 945 1172 948 1185 975 1187 1018 1195M1103 985L1105 1020 1118 1065 1095 1070 1082 1042 1065 1030 1060 1050 1045 1055 1050 1070 1028 1080 1025 1130 1012 1160 1018 1195 1022 1210 1025 1270 1038 1288M1095 1070L1118 1102 1132 1098 1140 1118 1145 1150 1178 1195"/>
        </g>
        <!-- eastern state -->
        <g transform="translate(1200 640) scale(.45918 .33333)">
          <path class="o" d="M532 180L580 190 580 205 566 208 545 238 530 210z"/>
          <path class="y" d="M226-67L172-7 146-12 146 12 103 0 95 22 108 40 106 70 67 107 56 135 108 128 120 112 138 108 160 130 198 170 202 205 185 270 181 308 165 318 151 360 150 410 143 450 150 450 163 452 177 383 195 387 243 323 248 350 255 357 305 353 313 345 317 293 322 293 325 315 345 335 365 347 363 372 380 404 405 402 413 410 413 445 435 440 455 453 470 445 473 432 487 430 500 380 495 365 508 342 525 318 545 315 538 270 545 238 530 210 532-67z"/>
          <path class="k" d="M226-67L172-7 146-12 146 12 103 0 95 22 108 40 106 70 67 107 56 135 108 128 120 112 138 108 160 130 198 170 202 205 185 270 181 308 165 318 151 360 150 410 143 450M580 190L580 205 566 208 545 238 530 210 532 190"/>
        </g>
      </svg>
    </section>
  </main>

  <footer class="status">
    <label class="locate"><svg viewBox="0 0 20 20"><circle cx="8" cy="8" r="6" fill="none" stroke="#777" stroke-width="1.500"/><path d="M12 12l6 6" stroke="#777" stroke-width="2"/></svg>Type to locate (Ctrl+K)</label>
    <span class="lb l1">Coordinate</span><span class="fld f1">0.31,10.29</span>
    <svg class="mouse" viewBox="0 0 24 24"><path d="M1 1l4 5M1 7l4 3M2 12h3M15 4l2-3M19 6l3-4M21 10l2-2" stroke="#111" stroke-width="1.500"/><path d="M6 3l5-2 4 4 5 10c1 5-2 8-6 8s-5-2-5-5z" fill="#fff" stroke="#111" stroke-width="2"/><path d="M7 5l7 1M8 9l8-1M11 2l3 6" stroke="#111" stroke-width="2" fill="none"/><ellipse cx="14" cy="16" rx="4" ry="3" fill="none" stroke="#111" stroke-width="1.500"/></svg>
    <span class="lb l2">Scale</span><span class="fld f2">1:6833634<i class="drop"></i></span>
    <svg class="lock" viewBox="0 0 20 24"><path d="M4 12V7a6 6 0 0 1 12 0v5" fill="none" stroke="#777" stroke-width="2.500"/><rect x="1" y="11" width="18" height="12" rx="1" fill="#666"/></svg>
    <span class="lb l3">Magnifier</span><span class="fld f3">100%<i class="spin"></i></span>
    <span class="lb l4">Rotation</span><span class="fld f4">0.0 °<i class="spin"></i></span>
    <span class="cb"><svg><use href="#check"/></svg></span><span class="lb l5">Render</span>
    <svg class="crs" viewBox="0 0 24 24"><path d="M1.500 11C3 3 8 1.500 12 1.500S21 3 22.500 11L17 22H7z" fill="#bbb"/><path d="M1 11h22M4 6h16M5 17h14M12 1v22M8 2c-4 6-4 14 0 20M16 2c4 6 4 14 0 20M1 11l6 11h10l6-11" fill="none" stroke="#666" stroke-width="1.300"/></svg>
    <span class="lb l6">EPSG:4326</span>
    <svg class="bubble" viewBox="0 0 26 24"><ellipse cx="13" cy="10.500" rx="12" ry="9.500" fill="#5a5a5a"/><path d="M14 16h9l0 7z" fill="#5a5a5a"/></svg>
  </footer>

  <div class="taskbar">
    <div class="start"><svg viewBox="0 0 24 24"><path d="M0 3.500l10-1.400v9.400H0zM11 2l13-2v11.500H11zM0 12.500h10v9.400L0 20.500zM11 12.500h13V24l-13-2z" fill="#fff"/></svg></div>
    <div class="tsearch"><svg viewBox="0 0 26 26"><circle cx="16" cy="9.500" r="7.500" fill="none" stroke="#222" stroke-width="2"/><path d="M11 15L2 24" stroke="#222" stroke-width="2"/></svg><span>Type here to search</span></div>
    <div class="apps">
      <span><svg viewBox="0 0 36 36"><circle cx="18" cy="18" r="17.500" fill="url(#gEdge)"/><path d="M1 16C3 5 11 0 19 .500c10 0 17 8 16.500 16-.5 6-5 8-9 8s-6-2-4-5c1-3-1-8-7-9C9 10 4 12 1 16z" fill="url(#gEdge2)"/><path d="M14 20c-2 6 3 14 15 11-3 3-7 4.500-11 4.500C9 34 5 22 14 20z" fill="#114a8b"/><path d="M22 20c-1 3 1 5 5 5 3 0 6-1 8-3-1 4-3 6-5 7-9 1-14-5-8-9z" fill="#22373f"/></svg></span>
      <span class="run"><svg viewBox="0 0 36 36"><path d="M2 6h12l3 3h17v22H2z" fill="#fcd15a"/><path d="M2 5h12l3 4H2z" fill="#d99a1c"/><path d="M2 18h32v13H2z" fill="#fdca45"/><path d="M8 31V22q0-3 3-3h14q3 0 3 3v9h-5v-6H13v6z" fill="#3c97dc"/></svg></span>
      <span class="run"><svg viewBox="0 0 36 36"><path d="M26 1l9 4v26l-9 4z" fill="#29a8f0"/><path d="M26 1v10L6 27 1 23z" fill="#1486d2"/><path d="M26 35V25L6 9 1 13z" fill="#1173bb"/></svg></span>
      <span><svg viewBox="0 0 36 36"><rect x="2" y="5" width="33" height="26" fill="#000" stroke="#bbb"/><path d="M2 5h33v4H2z" fill="#ccc"/><path d="M3 9h31L3 22z" fill="#444"/><text x="5" y="16" font-family="Liberation Mono" font-size="7" fill="#fff">C:\_</text></svg></span>
      <span class="run"><svg viewBox="0 0 36 36"><circle cx="18" cy="18" r="17.500" fill="#fbc116"/><path d="M18 18L3 9.200A17.500 17.500 0 0 1 33 9H18z" fill="#e33b2e"/><path d="M18 18L3 9A17.500 17.500 0 0 0 17 35.500l8-13z" fill="#33a852"/><circle cx="18" cy="18" r="8.700" fill="#fff"/><circle cx="18" cy="18" r="7" fill="#3079ee"/></svg></span>
      <span><svg viewBox="0 0 36 36"><path d="M4 1h20l8 9v22q0 3-3 3H7q-3 0-3-3z" fill="#e4e4e4" stroke="#888"/><path d="M22 1h10v11z" fill="#6d7377"/><path d="M9 3h11v7l5 4v18H9z" fill="#f8f8f8"/></svg></span>
      <span><svg viewBox="0 0 36 36"><circle cx="18" cy="18" r="16.500" fill="#fff"/><circle cx="18" cy="18" r="13.500" fill="none" stroke="#1565c0" stroke-width="3"/><path d="M25 13a8.500 8.500 0 1 0 0 10M35 18H17" fill="none" stroke="#1565c0" stroke-width="4"/></svg></span>
      <span class="run active"><svg viewBox="0 0 24 24"><use href="#qgis"/></svg></span>
      <span class="run"><svg viewBox="0 0 36 36"><path d="M18 6h16v24H18z" fill="#fff" stroke="#2b579a"/><path d="M21 11h11M21 15h11M21 19h11M21 23h11M21 27h11" stroke="#2b579a" stroke-width="1.500"/><path d="M2 6l18-4v32L2 30z" fill="#2b5fb0"/><text x="4" y="23" font-family="Open Sans" font-weight="bold" font-size="14" fill="#fff">W</text></svg></span>
      <span class="run"><svg viewBox="0 0 36 36"><path d="M2 22C2 10 12 5 24 8c8 2 10 8 6 11-3 2-2 5-3 9-2 6-9 6-12 5-3 0-2-5-5-5-4 0-8-1-8-6z" fill="#d7e9f7" stroke="#9dbdd8"/><circle cx="9" cy="18" r="3" fill="#d33"/><circle cx="15" cy="12.500" r="3" fill="#3a6"/><circle cx="22" cy="13" r="2.500" fill="#fb3"/><circle cx="9" cy="24" r="2.500" fill="#4c5"/><path d="M19 33l11-25" stroke="#e58a22" stroke-width="3"/><path d="M27 9l4-8 4 2-4 8z" fill="#b88a52"/></svg></span>
      <span class="run"><svg viewBox="0 0 36 36"><ellipse cx="11" cy="22" rx="10" ry="6" fill="#aaa" stroke="#777"/><ellipse cx="16" cy="11" rx="13" ry="9.500" fill="#fff" stroke="#cf2b2b" stroke-width="2.500"/><path d="M11 8l13 16M21 6l-3 18" stroke="#999" stroke-width="2.500"/><circle cx="28" cy="25" r="4" fill="none" stroke="#1c86d1" stroke-width="2.500"/><circle cx="21" cy="30" r="4" fill="none" stroke="#1c86d1" stroke-width="2.500"/></svg></span>
      <span class="run"><svg viewBox="0 0 36 36"><path d="M18 0c3 8 13 14 13 23 0 17-26 17-26 1C5 15 16 12 18 0z" fill="#e8417a"/><path d="M18 0c2 5 5 8 8 12L8 17c4-5 9-8 10-17z" fill="#fbb81c"/><path d="M5 24c8 2 12-6 24-9 7 22-23 27-24 9z" fill="#7c4fd0"/><path d="M5 23c8 4 15 0 25 4-5 11-23 11-25-4z" fill="#2fb6e6"/></svg></span>
    </div>
    <div class="tray">
      <svg class="t1" viewBox="0 0 18 12"><path d="M1 11l8-8 8 8" fill="none" stroke="#fff" stroke-width="1.600"/></svg>
      <svg class="t2" viewBox="0 0 26 18"><path d="M9 6h13v8H7z" fill="#fff"/><path d="M9 3h15v14H5v-7M24 7h2v5h-2M1 1v4h6V1M4 5v6" fill="none" stroke="#fff" stroke-width="1.500"/></svg>
      <svg class="t3" viewBox="0 0 22 22"><g fill="none" stroke="#fff" stroke-width="1.500"><path d="M2 20C2 9 9 2 20 2"/><path d="M6.500 20C6.500 12 12 6.500 20 6.500"/><path d="M11 20c0-5 4-9 9-9"/><path d="M15 20c0-3 2-5 5-5"/></g><circle cx="19" cy="19" r="1.800" fill="#fff"/></svg>
      <svg class="t4" viewBox="0 0 24 20"><path d="M1 7h4l5-5v16l-5-5H1z" fill="none" stroke="#fff" stroke-width="1.500"/><path d="M13 7q2 3 0 6M16 4.500q4 5.500 0 11M19 2q6 8 0 16" fill="none" stroke="#fff" stroke-width="1.300"/></svg>
      <span class="deu">DEU</span>
      <div class="clock"><span>4:18 PM</span><span>10/6/2023</span></div>
      <div class="note"><svg viewBox="0 0 24 24"><path d="M0 0h24v18H8l0 6-5-6H0z" fill="#fff"/><path d="M4 5h16M4 9h16M4 13h12" stroke="#1b2742" stroke-width="1.500"/></svg><em>21</em></div>
      <i class="peek"></i>
    </div>
  </div>

  <div class="menu context">
    <div class="mi"><svg><use href="#zoomL"/></svg><span><u>Z</u>oom to Layer(s)</span></div>
    <div class="mi"><svg><use href="#zoomS"/></svg><span>Zoom to <u>S</u>election</span></div>
    <div class="mi"><svg><use href="#glasses"/></svg><span>Show in <u>O</u>verview</span></div>
    <div class="mi"><span class="cb"></span><span>Show Feature <u>C</u>ount</span></div>
    <div class="mi"><svg class="tag"><use href="#abc"/></svg><span>Show <u>L</u>abels</span></div>
    <div class="mi n"><span>Copy Layer</span></div>
    <div class="mi n"><span>Re<u>n</u>ame Layer</span></div>
    <div class="mi"><svg><use href="#db"/></svg><span>Update SQL Layer…</span></div>
    <hr>
    <div class="mi"><svg><use href="#dup"/></svg><span><u>D</u>uplicate Layer</span></div>
    <div class="mi"><svg><use href="#rem"/></svg><span><u>R</u>emove Layer…</span></div>
    <hr>
    <div class="mi n"><span>Move to <u>B</u>ottom</span></div>
    <hr>
    <div class="mi"><svg><use href="#table"/></svg><span>Open <u>A</u>ttribute Table</span></div>
    <div class="mi n"><span><u>F</u>ilter…</span></div>
    <div class="mi n"><span>C<u>h</u>ange Data Source…</span></div>
    <hr>
    <div class="mi n"><span>Set Layer Scale <u>V</u>isibility…</span></div>
    <div class="mi n"><span>Layer CRS</span><i class="sub"></i></div>
    <hr>
    <div class="mi n hot"><span>E<u>x</u>port</span><i class="sub"></i></div>
    <hr>
    <div class="mi n"><span>Styles</span><i class="sub"></i></div>
    <div class="mi n"><span>Add Layer Notes…</span></div>
    <div class="mi n"><span><u>P</u>roperties…</span></div>
  </div>
  <div class="menu submenu">
    <div class="mi"><span>Save Features <u>A</u>s…</span></div>
    <div class="mi hot"><span>Save <u>S</u>elected Features As…</span></div>
    <div class="mi"><span>Save as Layer <u>D</u>efinition File…</span></div>
    <div class="mi"><span>Save as <u>Q</u>GIS Layer Style File…</span></div>
  </div>

  <div class="backdrop"></div>
  <section class="dialog">
    <div class="dtitle"><svg class="cap" viewBox="0 0 16 4"><path d="M0 4Q8-3 16 4z" fill="#8cb43a"/></svg><svg class="i24"><use href="#qgis"/></svg><span>Save Vector Layer as…</span><svg class="x" viewBox="0 0 16 16"><path d="M.5.500l15 15M15.500.500l-15 15" stroke="#111" stroke-width="1.300"/></svg></div>
    <div class="form">
      <div class="row r1"><label>Format</label><div class="combo">GeoPackage<i class="drop"></i></div></div>
      <div class="row r2"><label>File name</label><div class="inp focus"><span>s\moyeniyi\Downloads\New selected features.gpkg</span><i class="caret"></i><svg viewBox="0 0 20 14"><path d="M6 0h14v14H6L0 7z" fill="#8a8a8a"/><path d="M9 3.500l7 7M16 3.500l-7 7" stroke="#fff" stroke-width="1.800"/></svg></div><div class="btn dots">…</div></div>
      <div class="row r3"><label>Layer name</label><div class="inp">New selected features</div></div>
      <div class="row r4"><label>CRS</label><div class="combo">EPSG:4326 - WGS 84<i class="drop"></i></div><div class="btn globe"><svg viewBox="0 0 24 24"><use href="#crs" width="23" height="23"/><use href="#pen" x="13" y="13" width="11" height="11"/></svg></div></div>
    </div>
    <div class="frame">
      <div class="content">
        <div class="row enc"><label>Encoding</label><div class="combo off">UTF-8<i class="drop"></i></div></div>
        <div class="ck c1"><span class="cb"><svg><use href="#check"/></svg></span>Save only selected features</div>
        <div class="hd h1"><i class="tri"></i>Select fields to export and their export options</div>
        <div class="ck c2"><span class="cb"><svg><use href="#check"/></svg></span>Persist layer metadata</div>
        <div class="hd h2"><i class="tri down"></i>Geometry</div>
        <div class="group">
          <div class="row"><label>Geometry type</label><div class="combo">Automatic<i class="drop"></i></div></div>
          <div class="ck off c3"><span class="cb"></span>Force multi-type</div>
          <div class="ck off c4"><span class="cb"></span>Include z-dimension</div>
        </div>
        <div class="hd h3"><i class="tri"></i><span class="cb"></span>Extent (current: none)</div>
        <div class="hd h4"><i class="tri down"></i>Layer Options</div>
        <div class="group last"></div>
      </div>
      <div class="vscroll"><i class="up"></i><i class="thumb"></i><i class="dn"></i></div>
    </div>
    <div class="buttons">
      <div class="ck"><span class="cb"><svg><use href="#check"/></svg></span>Add saved file to map</div>
      <div class="btn ok">OK</div><div class="btn cancel">Cancel</div><div class="btn hlp">Help</div>
    </div>
  </section>
  <div class="notch"></div>

  <div class="mark m1"></div><div class="mark m2"></div><div class="mark m3"></div><div class="mark m4"></div><div class="mark m5"></div><div class="mark m6"></div><div class="mark m7"></div>
</div>
</body>
</html>
```
FILE: styles.css
```css
* { box-sizing: border-box; }
body { margin: 0; font-family: "Open Sans", "Noto Sans", sans-serif; font-size: 17px; color: #000; letter-spacing: -.15px; }
.defs { position: absolute; }
.screen { position: relative; width: 1920px; height: 1080px; overflow: hidden; background: #efefef; display: flex; flex-direction: column; white-space: nowrap; }
u { text-decoration: underline; text-decoration-thickness: 1px; text-underline-offset: 2px; }
ul { list-style: none; margin: 0; padding: 0; }
i { font-style: normal; }
svg { display: block; flex: none; }
.i24 { width: 24px; height: 24px; }

.titlebar { height: 34px; background: #fff; display: flex; align-items: center; gap: 6px; padding-left: 2px; }
.menubar { height: 30px; display: flex; align-items: center; border-bottom: 1px solid #d2d2d2; gap: 17px; padding-top: 2px; }
.menubar .left { width: 631px; padding-left: 13px; display: flex; gap: 17px; }

.toolbar { display: flex; align-items: center; background: linear-gradient(#fafafa, #ededed); border-bottom: 1px solid #b4b4b4; }
.toolbar.one { height: 43px; }
.toolbar.two { height: 43px; }
.toolbar .left { display: flex; align-items: center; width: 638px; flex: none; overflow: hidden; padding-left: 5px; }
.toolbar.two .left { width: 641px; }
.toolbar b { width: 33px; height: 31px; flex: none; display: flex; align-items: center; justify-content: center; }
.toolbar b svg { width: 24px; height: 24px; }
.toolbar b svg.tag { width: 23px; height: 14px; margin-bottom: 6px; }
.toolbar b.on { background: #dadada; border: 1px solid #b4b4b4; border-radius: 2px; }
.grip { width: 23px; height: 18px; flex: none; background: radial-gradient(circle, #999 0.8px, transparent 1.1px) 12px 0 / 3px 3px; background-clip: content-box; padding: 0 4px 0 13px; }
.grip.first { width: 13px; padding: 0 4px 0 3px; }
.grip.wide { width: 26px; }
.sep { width: 11px; height: 20px; flex: none; background: linear-gradient(#ccc, #ccc) center / 1px 100% no-repeat; }
.drop { width: 18px; height: 12px; flex: none; display: flex; align-items: center; justify-content: center; }
.drop::before { content: ""; border: 6px solid transparent; border-top: 7px solid #5a5a5a; border-bottom: 0; }

.work { height: 834px; display: flex; justify-content: space-between; }
.docks { width: 486px; height: 834px; display: flex; flex-direction: column; }
.dock-title { margin: 0; font-size: 17px; font-weight: 400; height: 25px; line-height: 24px; padding-left: 4px; }
.dock-tools { height: 31px; display: flex; align-items: center; padding-left: 9px; gap: 9px; }
.dock-tools svg { width: 16px; height: 16px; }
.browser-tools { height: 30px; }
.tree { height: 229px; border: 1px solid #b4b4b4; background: #fff; overflow: hidden; font-size: 17px; padding-top: 1px; letter-spacing: 0; }
.tree li { height: 27px; display: flex; align-items: center; padding-left: 47px; }
.tree li.name { letter-spacing: .15px; }
.tree li.spaced { letter-spacing: .45px; }
.tree li.alt { background: #f0f0f0; }
.tree svg { width: 22px; height: 20px; margin-right: 7px; }
.tri { width: 17px; flex: none; display: block; }
.tri::before { content: ""; display: block; width: 0; border: 5.500px solid transparent; border-left: 6px solid #555; border-right: 0; }
.tri.none { visibility: hidden; }
.tri.down { margin-left: -2px; width: 19px; }
.tri.down::before { border: 5.500px solid transparent; border-top: 6.500px solid #333; border-bottom: 0; }
.hscroll { height: 21px; border: 1px solid #b4b4b4; border-top: 0; background: #e4e4e4; display: flex; }
.ar { width: 21px; background: #f8f8f8; display: flex; align-items: center; justify-content: center; }
.ar.l { border-right: 1px solid #b4b4b4; }
.ar.r { border-left: 1px solid #b4b4b4; margin-left: auto; }
.ar::before { content: ""; border: 5.500px solid transparent; }
.ar.l::before { border-right: 6px solid #555; border-left: 0; }
.ar.r::before { border-left: 6px solid #555; border-right: 0; }
.hscroll .thumb { width: 146px; background: linear-gradient(#fff, #f1f1f1); border-right: 1px solid #b4b4b4; }
.hscroll .thumb.full { flex: 1; }
.split { height: 10px; background: radial-gradient(circle, #999 .7px, transparent 1px) 236px 4px / 3px 3px; background-repeat: repeat-x; clip-path: inset(0 234px 0 236px); }
.layers-title { height: 24px; line-height: 24px; }
.layer-tools { height: 29px; padding-left: 10px; }
.layer-tools .drop { width: 14px; margin: 0 -3px 0 -4px; }
.layers { flex: 1; background: #fff; border: 1px solid #b4b4b4; padding-top: 3px; overflow: hidden; }
.layers li { height: 27px; display: flex; align-items: center; padding-left: 33px; color: #808080; font-style: italic; font-weight: 700; font-size: 17px; letter-spacing: .3px; }
.layers li.sel { background: #0078d7; color: #fff; font-style: normal; letter-spacing: -.1px; }
.layers li.sel .nm { background: #1883dc; align-self: stretch; line-height: 26px; text-decoration: underline; padding-left: 3px; margin-left: 2px; }
.layers .nm { padding-left: 5px; }
.sw { width: 22px; height: 22px; border: 1px solid #444; margin-left: 6px; flex: none; }
.tan { background: #b39351; } .pink { background: #e8718d; } .violet { background: #8d5a99; }
.cb { width: 21px; height: 21px; flex: none; display: block; border: 1px solid #bdbdbd; background: #fff; box-shadow: inset 0 1px 0 #eee; }
.cb svg { width: 19px; height: 19px; }
.canvas { width: 1425px; height: 834px; background: #fff; border: 1px solid #b4b4b4; border-right-width: 2px; margin-right: 0; }
.map .o { fill: #ff9e17; } .map .y { fill: #ff0; stroke: #333; stroke-width: 1px; vector-effect: non-scaling-stroke; }
.map .k { fill: none; stroke: #232323; stroke-width: 1.500px; stroke-linejoin: round; vector-effect: non-scaling-stroke; }
.map .t { fill: none; stroke: #333; stroke-width: 1px; vector-effect: non-scaling-stroke; }

.status { height: 36px; display: flex; align-items: center; padding-left: 4px; font-size: 15.500px; letter-spacing: -.25px; }
.locate { width: 291px; height: 30px; background: #fff; border: 1px solid #adadad; border-radius: 2px; color: #777; display: flex; align-items: center; gap: 8px; padding: 1px 0 0 10px; font-size: 16px; letter-spacing: -.15px; }
.locate svg { width: 20px; height: 19px; }
.lb { flex: none; padding-top: 1px; }
.l1 { width: 80px; margin-left: 598px; } .l2 { width: 39px; margin-left: 13px; } .l3 { width: 68px; margin-left: 8px; } .l4 { width: 68px; margin-left: 9px; } .l5 { width: 64px; margin-left: 8px; } .l6 { width: 84px; margin-left: 1px; letter-spacing: 0; }
.fld { height: 29px; flex: none; background: #fff; border: 1px solid #adadad; border-radius: 3px; display: flex; align-items: center; padding-left: 6px; overflow: hidden; font-size: 16px; }
.f1 { width: 93px; } .f2 { width: 114px; padding-left: 2px; } .f3 { width: 109px; padding-left: 5px; } .f4 { width: 101px; padding-left: 5px; }
.f2 .drop { margin-left: auto; width: 30px; height: 29px; background: #f1f1f1; }
.spin { margin-left: auto; width: 20px; height: 29px; border-left: 1px solid #adadad; background: #f4f4f4; display: flex; flex-direction: column; align-items: center; justify-content: space-evenly; }
.spin::before { content: ""; border: 5px solid transparent; border-bottom: 6px solid #666; border-top: 0; }
.spin::after { content: ""; border: 5px solid transparent; border-top: 6px solid #666; border-bottom: 0; }
.mouse { width: 24px; height: 24px; margin-left: 4px; }
.lock { width: 20px; height: 24px; margin-left: 12px; }
.status .cb { margin-left: 7px; }
.status .crs { width: 24px; height: 22px; }
.bubble { width: 26px; height: 24px; margin-left: 23px; }

.taskbar { height: 60px; display: flex; align-items: stretch; background: linear-gradient(90deg, #20363d 0, #22373f 50%, #1c2b40 75%, #1a2640 100%); color: #fff; }
.start { width: 73px; display: flex; align-items: center; justify-content: center; padding-right: 2px; }
.start svg { width: 24px; height: 24px; }
.tsearch { width: 515px; background: #f2f2f2; border: 2px solid #c3c3c3; color: #222; font-size: 21.500px; letter-spacing: -.45px; display: flex; align-items: center; gap: 17px; padding-left: 15px; }
.tsearch span { padding-top: 2px; }
.tsearch svg { width: 25px; height: 25px; }
.apps { display: flex; margin-left: 3px; }
.apps span { width: 75px; display: flex; align-items: center; justify-content: center; position: relative; }
.apps svg { width: 36px; height: 36px; }
.run { background: linear-gradient(#76b9ed, #76b9ed) center bottom / 61px 3px no-repeat; }
.run.active { background: linear-gradient(#76b9ed, #76b9ed) center bottom / 73px 3px no-repeat, linear-gradient(#4b5d65, #4b5d65) center / 73px 100% no-repeat; }
.tray { display: flex; align-items: center; flex: 1; margin-left: 55px; }
.t1 { width: 18px; height: 12px; } .t2 { width: 26px; height: 18px; margin-left: 15px; } .t3 { width: 20px; height: 20px; margin-left: 15px; } .t4 { width: 24px; height: 20px; margin-left: 12px; }
.deu { font-size: 16.500px; letter-spacing: -.3px; width: 35px; margin-left: 16px; }
.clock { width: 100px; margin-left: 6px; display: flex; flex-direction: column; align-items: center; line-height: 28.500px; font-size: 17px; letter-spacing: 0; padding-left: 10px; }
.note { width: 24px; height: 24px; margin-left: 25px; position: relative; margin-top: -1px; }
.note svg { width: 24px; height: 22px; margin-top: -4px; }
.note em { position: absolute; left: 9px; top: 9px; width: 28px; height: 25px; border-radius: 50%; background: #555; border: 1px solid #aaa; font: 700 14px/22px "Open Sans", sans-serif; text-align: center; }
.peek { width: 1px; height: 60px; background: #68748a; margin-left: 29px; }

.menu { position: absolute; background: #fff; border: 1px solid #979797; box-shadow: 3px 4px 4px rgba(0,0,0,.45); }
.context { left: 319px; top: 0; width: 330px; height: 672px; }
.submenu { left: 649px; top: 538px; width: 321px; height: 132px; }
.mi { height: 33px; display: flex; align-items: center; padding-left: 7px; font-size: 17px; letter-spacing: .02px; }
.mi svg, .mi .cb { width: 24px; height: 24px; margin-right: 6px; }
.mi .cb { width: 21px; height: 21px; margin: 0 8px 0 1px; }
.mi svg.tag { height: 14px; }
.mi.n { padding-left: 37px; }
.submenu .mi { padding-left: 36px; }
.hot { background: #0078d7; color: #fff; }
.menu hr { height: 1px; border: 0; background: #bdbdbd; margin: -1px 6px 2px; }
.menu .hot + hr { position: relative; }
.sub { margin-left: auto; margin-right: 6px; border: 5px solid transparent; border-left: 6px solid #555; border-right: 0; }
.hot .sub { border-left-color: #9cc9ee; }

.backdrop { position: absolute; left: 1304px; top: 20px; width: 599px; height: 683px; background: linear-gradient(#c9870f, #c9870f) 277px 100% / 308px 6px no-repeat, linear-gradient(#ff9e17 0 20%, #ee0 20% 42%, #d9860f 42%) 100% 90px / 1px 580px no-repeat, #dcdcdc; }
.dialog { position: absolute; left: 1308px; top: 9px; width: 594px; height: 690px; background: #f0f0f0; border: 1px solid #6f6f6f; border-top-color: #777; font-size: 15.500px; letter-spacing: -.2px; }
.notch { position: absolute; left: 1304px; top: 9px; width: 9px; height: 11px; background: #fff; }
.dtitle { height: 55px; background: #fff; display: flex; align-items: center; padding: 11px 16px 0 12px; font-size: 17px; letter-spacing: -.15px; gap: 5px; position: relative; }
.dtitle .x { width: 16px; height: 15px; margin-left: auto; }
.cap { position: absolute; left: 17px; top: 10px; width: 16px; height: 4px; }
.form { padding: 27px 29px 0 30px; }
.row { display: flex; align-items: center; }
.row label { width: 91px; flex: none; }
.r1 { height: 29px; } .r2 { height: 30px; margin-top: 9px; } .r3 { height: 30px; margin-top: 9px; } .r4 { height: 31px; margin-top: 9px; }
.r3 .inp { letter-spacing: -.4px; }
.r4 .combo { letter-spacing: .35px; }
.form .row > div { height: 100%; }
.combo, .inp, .btn { border: 1px solid #a9a9a9; border-radius: 3px; display: flex; align-items: center; background: linear-gradient(#fdfdfd, #ededed); }
.combo { flex: 1; padding-left: 4px; padding-right: 7px; }
.combo .drop { margin-left: auto; }
.inp { flex: 1; background: #fff; padding-left: 2px; overflow: hidden; }
.inp.focus { border-color: #3daee9; flex: none; width: 402px; }
.inp svg { width: 20px; height: 14px; margin-left: 8px; }
.caret { width: 1px; height: 19px; background: #000; }
.btn { justify-content: center; }
.form .dots { width: 32px; margin-left: 8px; height: 26px; }
.form .globe { width: 33px; margin-left: 3px; }
.globe svg { width: 24px; height: 24px; }
.frame { margin: 22px 0 0 17px; width: 559px; height: 381px; border: 1px solid #b4b4b4; display: flex; }
.content { flex: 1; padding: 13px 13px 0 13px; overflow: hidden; }
.enc { height: 28px; }
.enc label { width: 99px; }
.enc .combo { height: 28px; }
.combo.off { color: #8a8a8a; border-color: #c6c6c6; background: #efefef; }
.combo.off .drop::before { border-top-color: #aaa; }
.ck { display: flex; align-items: center; gap: 8px; height: 21px; }
.ck.off { color: #808080; }
.ck.off .cb, .h3 .cb { border-color: #c4c4c4; }
.ck.off .cb { background: #f0f0f0; }
.c1 { margin-top: 10px; }
.hd { display: flex; align-items: center; height: 21px; font-weight: 700; font-size: 16.500px; letter-spacing: -.1px; padding-left: 5px; }
.h1 { margin-top: 11px; } .c2 { margin-top: 15px; } .h2 { margin-top: 11px; }
.h3 { margin-top: 10px; letter-spacing: -.3px; } .h3 .tri { width: 15px; } .h3 .cb { margin-right: 11px; }
.h4 { margin-top: 13px; letter-spacing: -.3px; }
.group { margin: 4px 0 0 1px; height: 129px; border: 1px solid #d4d4d4; border-radius: 2px; background: #ececec; padding: 12px 15px 0 14px; }
.group .row { justify-content: space-between; }
.group label { width: auto; }
.group .combo { flex: none; width: 234px; height: 32px; }
.c3 { margin-top: 10px; } .c4 { margin-top: 13px; }
.group.last { height: 20px; }
.vscroll { width: 21px; border-left: 1px solid #b4b4b4; background: #e4e4e4; display: flex; flex-direction: column; }
.vscroll i { height: 21px; background: #fafafa; display: flex; align-items: center; justify-content: center; }
.up { border-bottom: 1px solid #b4b4b4; }
.dn { border-top: 1px solid #b4b4b4; margin-top: auto; }
.up::before { content: ""; border: 6px solid transparent; border-bottom: 6px solid #555; border-top: 0; }
.dn::before { content: ""; border: 6px solid transparent; border-top: 6px solid #555; border-bottom: 0; }
.vscroll i.thumb { height: 202px; background: linear-gradient(90deg, #fff, #f2f2f2); border-bottom: 1px solid #b4b4b4; }
.buttons { display: flex; align-items: center; height: 31px; margin: 9px 16px 0 119px; }
.buttons .ck { gap: 9px; width: 199px; flex: none; letter-spacing: -.1px; }
.buttons .btn { height: 31px; width: 80px; flex: none; }
.buttons .ok { border-color: #3daee9; background: linear-gradient(#fdfdfd, #e3e9ef); }
.buttons .cancel { margin-left: 8px; width: 81px; }
.buttons .hlp { margin-left: 9px; width: 81px; }

.mark { position: absolute; border: 3px solid #ed1c24; }
.m1 { left: -6px; top: 518px; width: 355px; height: 41px; }
.m2 { left: 331px; top: 528px; width: 291px; height: 48px; }
.m3 { left: 650px; top: 564px; width: 313px; height: 46px; }
.m4 { left: 1428px; top: 81px; width: 423px; height: 43px; }
.m5 { left: 1421px; top: 120px; width: 452px; height: 48px; }
.m6 { left: 1330px; top: 304px; width: 267px; height: 40px; }
.m7 { left: 1624px; top: 643px; width: 95px; height: 48px; }
```
